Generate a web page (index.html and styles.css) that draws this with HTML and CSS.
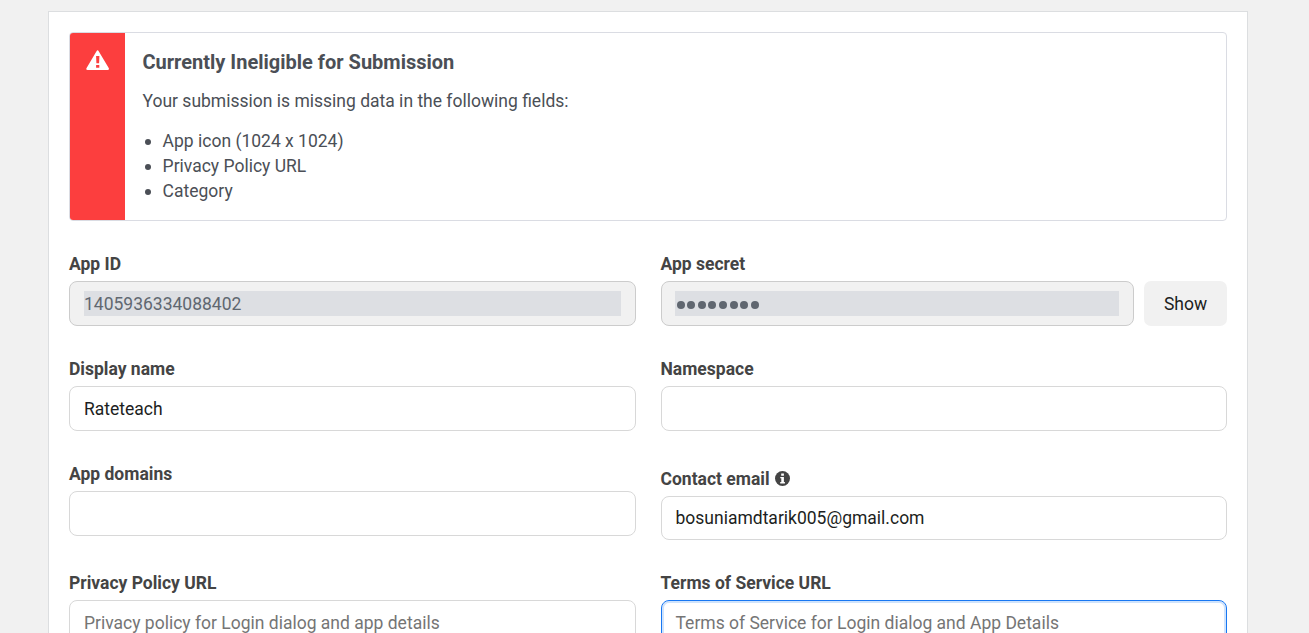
FILE: index.html
```html
<!DOCTYPE html>
<html lang="en">
<head>
<meta charset="utf-8">
<title>Basic settings</title>
<link rel="stylesheet" href="styles.css">
</head>
<body>
<main class="panel">
  <section class="alert">
    <div class="alert-side">
      <svg width="24" height="21" viewBox="0 0 24 21"><path fill="#fff" fill-rule="evenodd" d="M10.5 1.2Q11.6-.6 12.7 1.2L22.7 18Q23.6 20 21.6 20H1.6Q-.4 20 .6 18ZM10.1 6L10.4 13.2H13.1L13.4 6ZM10.1 14.9V17.8H13.3V14.9Z"/></svg>
    </div>
    <div class="alert-body">
      <h2 class="alert-title">Currently Ineligible for Submission</h2>
      <p class="alert-text">Your submission is missing data in the following fields:</p>
      <ul class="alert-list">
        <li>App icon (1024 x 1024)</li>
        <li>Privacy Policy URL</li>
        <li>Category</li>
      </ul>
    </div>
  </section>
  <section class="form">
    <div class="field">
      <div class="label">App ID</div>
      <div class="input disabled"><span class="value">1405936334088402</span></div>
    </div>
    <div class="field">
      <div class="label">App secret</div>
      <div class="secret">
        <div class="input disabled"><span class="value dots"><i></i><i></i><i></i><i></i><i></i><i></i><i></i><i></i></span></div>
        <button class="show">Show</button>
      </div>
    </div>
    <div class="field">
      <div class="label">Display name</div>
      <div class="input">Rateteach</div>
    </div>
    <div class="field">
      <div class="label">Namespace</div>
      <div class="input"></div>
    </div>
    <div class="field">
      <div class="label">App domains</div>
      <div class="input"></div>
    </div>
    <div class="field contact">
      <div class="label">Contact email
        <svg class="info" width="15" height="15" viewBox="0 0 15 15"><circle cx="7.5" cy="7.5" r="7.5" fill="#444"/><path fill="#fff" d="M6.2 2.4H8.9V4.7H6.2ZM5.3 6H8.9V11H9.9V12.4H5.2V11H6.3V7.3H5.3Z"/></svg>
      </div>
      <div class="input">bosuniamdtarik005@gmail.com</div>
    </div>
    <div class="field">
      <div class="label">Privacy Policy URL</div>
      <div class="input placeholder">Privacy policy for Login dialog and app details</div>
    </div>
    <div class="field">
      <div class="label">Terms of Service URL</div>
      <div class="input placeholder focused">Terms of Service for Login dialog and App Details</div>
    </div>
  </section>
</main>
</body>
</html>
```

FILE: styles.css
```css
* { box-sizing: border-box; }
html { height: 100%; overflow: hidden; }
body {
  margin: 0;
  height: 100%;
  overflow: hidden;
  padding: 11px 61px 0 48px;
  background: #f1f1f1;
  font: 17.5px/25px Roboto, "Liberation Sans", sans-serif;
  color: #1c1e21;
}
.panel {
  padding: 20px;
  background: #fff;
  border: 1px solid #dcdee0;
}
.alert {
  display: flex;
  height: 189px;
  border: 1px solid #dadce3;
  border-radius: 4px;
  overflow: hidden;
  color: #4b4f56;
}
.alert-side {
  flex: none;
  width: 55px;
  padding: 17px 0 0 16px;
  background: #fc3e3e;
}
.alert-side svg { display: block; }
.alert-body { padding: 16px 17.5px; }
.alert-title { margin: 0; font-size: 20px; line-height: 26px; font-weight: 700; }
.alert-text { margin: 14px 0 15px; }
.alert-list { margin: 0; padding: 0; list-style: none; }
.alert-list li { display: flex; align-items: center; gap: 11.6px; }
.alert-list li::before {
  content: "";
  width: 6px;
  height: 6px;
  margin: 1px 0 0 2.5px;
  border-radius: 50%;
  background: #4b4f56;
}
.form {
  display: grid;
  grid-template-columns: 1fr 1fr;
  column-gap: 25px;
  row-gap: 30px;
  align-items: start;
  padding-top: 30px;
}
.label {
  display: flex;
  align-items: center;
  gap: 5px;
  height: 25px;
  padding-top: 2px;
  margin-bottom: 5px;
  font-weight: 700;
  color: #444;
}
.info { margin-bottom: 3px; }
.input {
  display: flex;
  align-items: center;
  flex: 1;
  height: 45px;
  padding: 2px 14px 0;
  border: 1px solid #d8d8d8;
  border-radius: 8px;
  background: #fff;
}
.disabled { padding: 0 14px; background: #f1f1f1; border-color: #ccc; color: #606770; }
.value { flex: 1; height: 25px; line-height: 27px; background: #dddfe3; }
.dots { display: flex; align-items: center; gap: 2.6px; padding: 3px 0 0 1.6px; margin-left: -.5px; }
.dots i { width: 8px; height: 8px; border-radius: 50%; background: #606770; }
.secret { display: flex; gap: 10px; }
.show {
  width: 83px;
  height: 45px;
  padding: 2px 0 0;
  border: 0;
  border-radius: 7px;
  background: #f1f1f1;
  font: inherit;
  color: #1c1e21;
}
.contact { padding-top: 5px; }
.contact .input { height: 44px; padding-top: 0; }
.placeholder { color: #757575; }
.focused { border-color: #1877f2; box-shadow: inset 0 0 0 2px #cfe3fc; }
```
